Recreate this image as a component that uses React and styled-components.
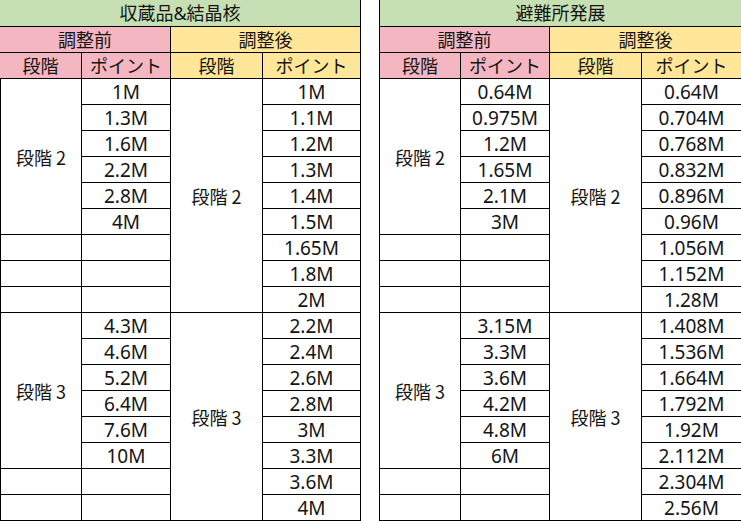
import React from "react";
import styled, { createGlobalStyle, css } from "styled-components";

const Global = createGlobalStyle`
  html, body { margin: 0; padding: 0; background: #fff; overflow: hidden; }
  body { font-family: "Noto Sans", "Noto Sans CJK JP", sans-serif; color: #141414; }
`;

const GREEN = "#C6E0B4";
const PINK = "#F4B6C0";
const YELLOW = "#FFE699";

const Page = styled.div`
  display: flex;
  gap: 18px;
  width: 760px;
`;

const Sheet = styled.div`
  display: grid;
  grid-template-columns: 82px 89px 92px ${(p) => p.$last}px;
  grid-template-rows: 27px repeat(19, 26px);
  flex: none;
`;

const cellBase = css`
  box-sizing: border-box;
  display: flex;
  align-items: center;
  justify-content: center;
  border-right: 1px solid #000;
  border-bottom: 1px solid #000;
  font-size: 18px;
  line-height: 1;
  white-space: nowrap;
  font-family: "Noto Sans", "Noto Sans CJK JP", sans-serif;
`;

const TitleCell = styled.div`
  ${cellBase};
  grid-column: 1 / span 4;
  background: ${GREEN};
  border-left: ${(p) => (p.$edge ? "1px solid #000" : "none")};
`;

const GroupCell = styled.div`
  ${cellBase};
  grid-column: span 2;
  background: ${(p) => p.$bg};
  border-left: ${(p) => (p.$edge ? "1px solid #000" : "none")};
`;

const HeadCell = styled.div`
  ${cellBase};
  background: ${(p) => p.$bg};
  border-left: ${(p) => (p.$edge ? "1px solid #000" : "none")};
`;

const DataCell = styled.div`
  ${cellBase};
  font-size: 19px;
  background: #fff;
  grid-column: ${(p) => p.$col};
  grid-row: ${(p) => p.$row} / span ${(p) => p.$span || 1};
  border-left: ${(p) => (p.$col === 1 ? "1px solid #000" : "none")};
  padding-top: 1px;
`;

const StageText = styled.span`
  font-family: "Noto Sans CJK JP", "Noto Sans", sans-serif;
  font-size: 18px;
`;

function Table({ title, before, after, edge, last }) {
  const firstRow = 4;
  const cells = [];
  const stageCol = [
    { r: 0, span: 6, label: "段階 2" },
    { r: 6, span: 1 },
    { r: 7, span: 1 },
    { r: 8, span: 1 },
    { r: 9, span: 6, label: "段階 3" },
    { r: 15, span: 1 },
    { r: 16, span: 1 },
  ];
  stageCol.forEach((s) =>
    cells.push(
      <DataCell key={"b" + s.r} $col={1} $row={firstRow + s.r} $span={s.span}>
        {s.label ? <StageText>{s.label}</StageText> : null}
      </DataCell>
    )
  );
  before.forEach((v, i) =>
    cells.push(
      <DataCell key={"bp" + i} $col={2} $row={firstRow + i}>
        {v}
      </DataCell>
    )
  );
  cells.push(
    <DataCell key="a2" $col={3} $row={firstRow} $span={9}>
      <StageText>段階 2</StageText>
    </DataCell>
  );
  cells.push(
    <DataCell key="a3" $col={3} $row={firstRow + 9} $span={8}>
      <StageText>段階 3</StageText>
    </DataCell>
  );
  after.forEach((v, i) =>
    cells.push(
      <DataCell key={"ap" + i} $col={4} $row={firstRow + i}>
        {v}
      </DataCell>
    )
  );
  return (
    <Sheet $last={last}>
      <TitleCell $edge={edge}>{title}</TitleCell>
      <GroupCell $bg={PINK} $edge={edge}>調整前</GroupCell>
      <GroupCell $bg={YELLOW}>調整後</GroupCell>
      <HeadCell $bg={PINK} $edge={edge}>段階</HeadCell>
      <HeadCell $bg={PINK}>ポイント</HeadCell>
      <HeadCell $bg={YELLOW}>段階</HeadCell>
      <HeadCell $bg={YELLOW}>ポイント</HeadCell>
      {cells}
    </Sheet>
  );
}

const leftBefore = ["1M", "1.3M", "1.6M", "2.2M", "2.8M", "4M", "", "", "", "4.3M", "4.6M", "5.2M", "6.4M", "7.6M", "10M", "", ""];
const leftAfter = ["1M", "1.1M", "1.2M", "1.3M", "1.4M", "1.5M", "1.65M", "1.8M", "2M", "2.2M", "2.4M", "2.6M", "2.8M", "3M", "3.3M", "3.6M", "4M"];
const rightBefore = ["0.64M", "0.975M", "1.2M", "1.65M", "2.1M", "3M", "", "", "", "3.15M", "3.3M", "3.6M", "4.2M", "4.8M", "6M", "", ""];
const rightAfter = ["0.64M", "0.704M", "0.768M", "0.832M", "0.896M", "0.96M", "1.056M", "1.152M", "1.28M", "1.408M", "1.536M", "1.664M", "1.792M", "1.92M", "2.112M", "2.304M", "2.56M"];

export default function App() {
  return (
    <>
      <Global />
      <Page>
        <Table title="収蔵品&結晶核" before={leftBefore} after={leftAfter} edge={false} last={98} />
        <Table title="避難所発展" before={rightBefore} after={rightAfter} edge={true} last={100} />
      </Page>
    </>
  );
}
